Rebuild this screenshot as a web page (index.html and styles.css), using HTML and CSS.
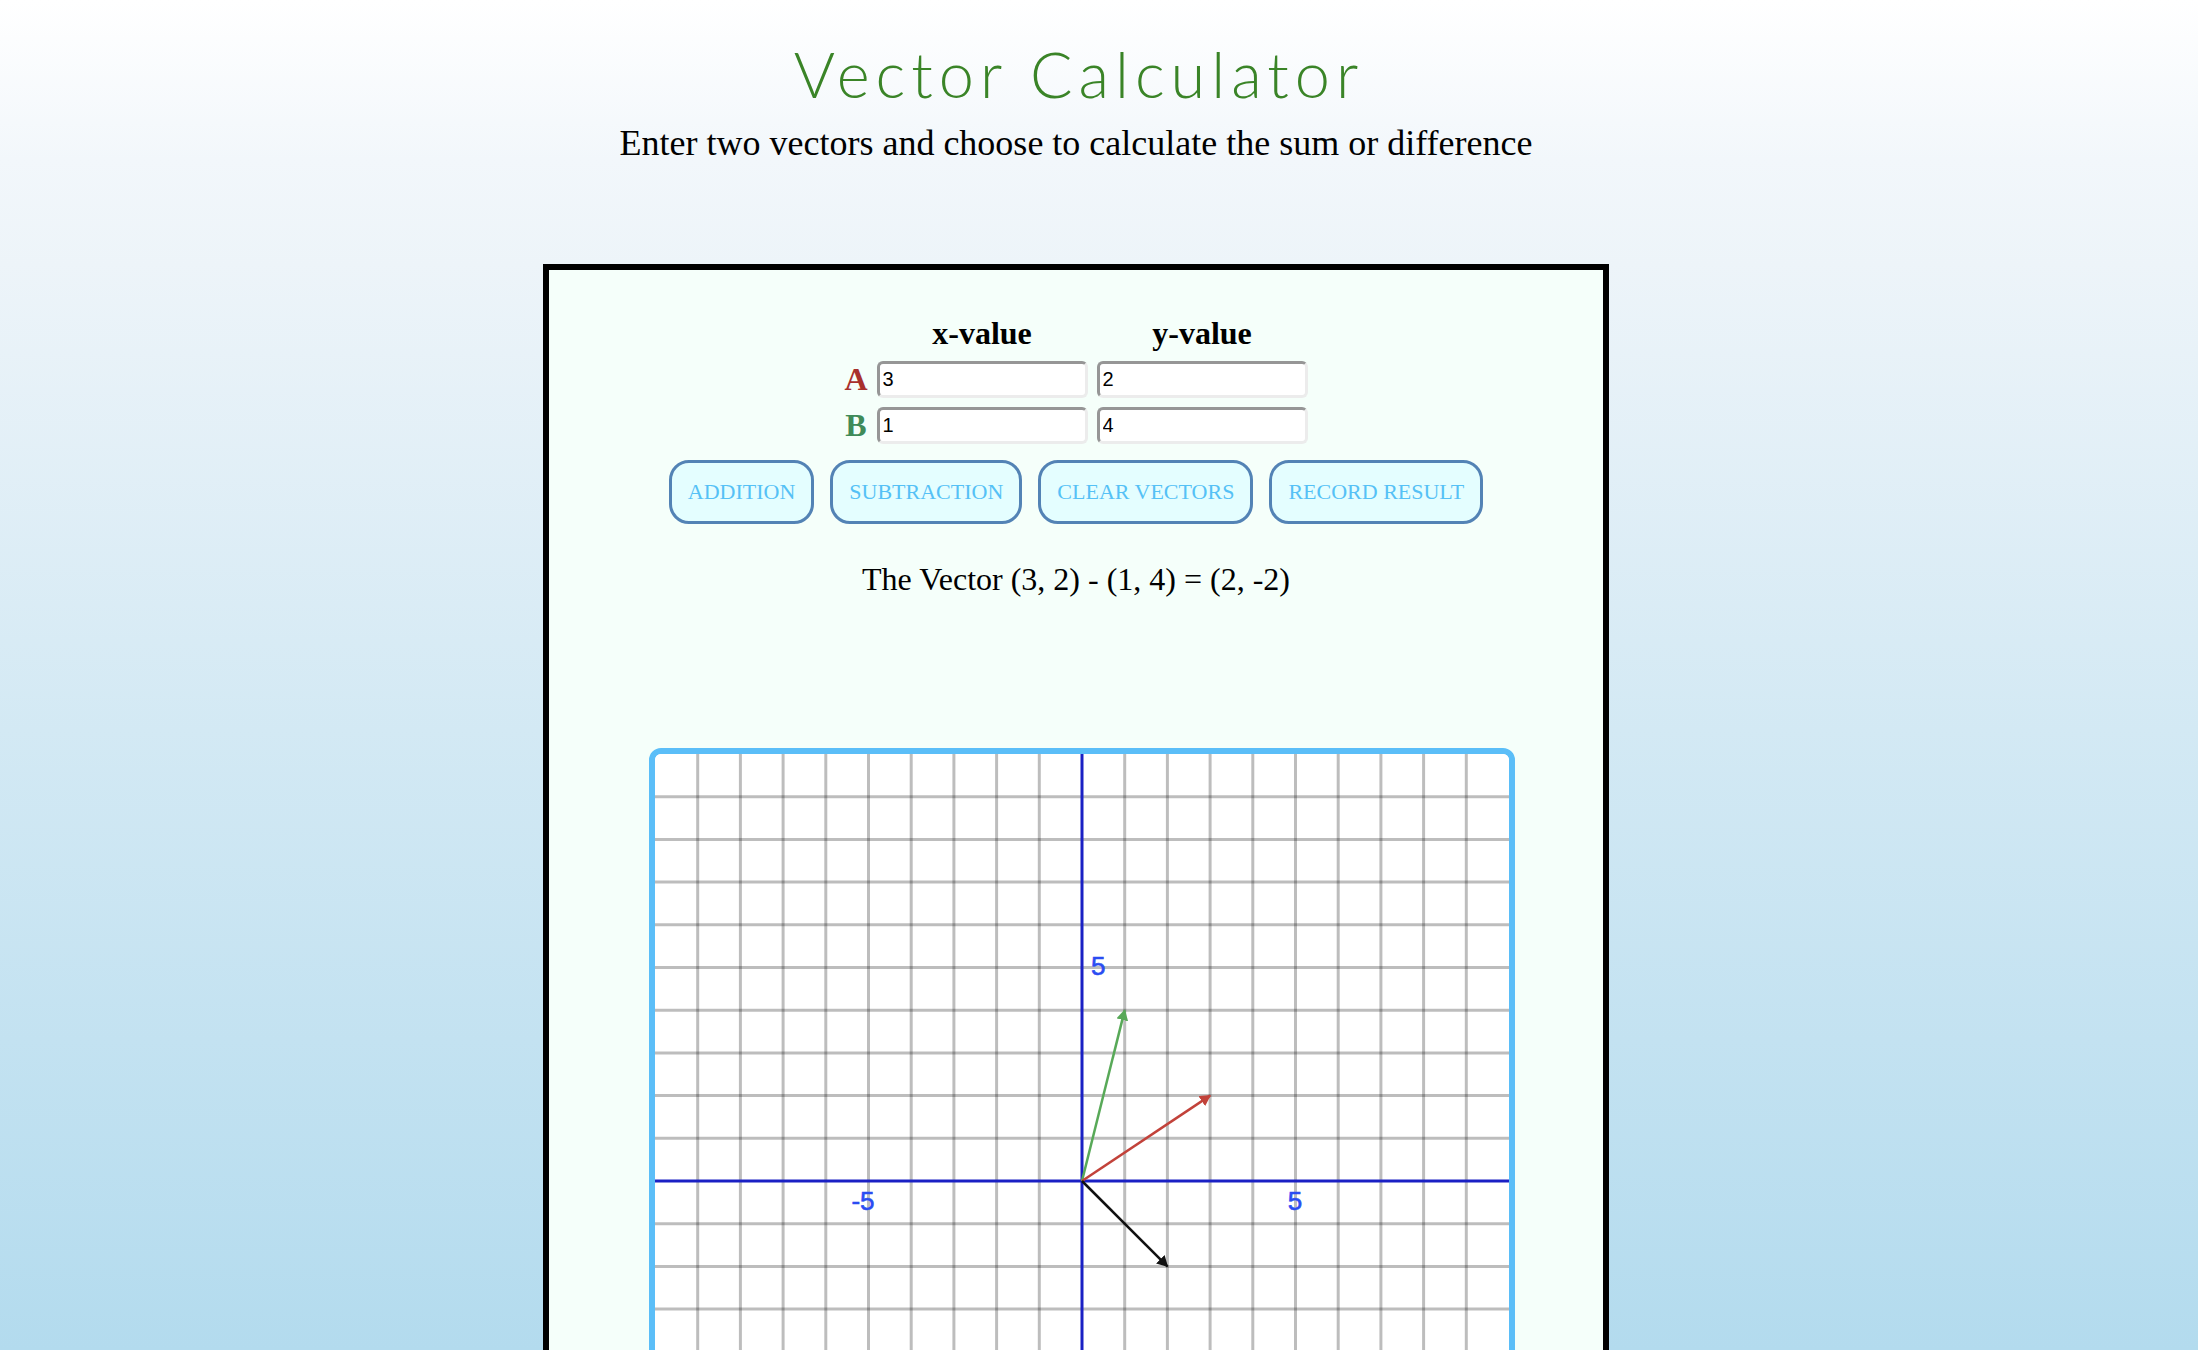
FILE: index.html
```html
<!DOCTYPE html>
<html lang="en">
<head>
<meta charset="utf-8">
<title>Vector Calculator</title>
<link rel="stylesheet" href="styles.css">
</head>
<body>
<header class="head">
  <h1 class="title">Vector Calculator</h1>
  <p class="subtitle">Enter two vectors and choose to calculate the sum or difference</p>
</header>
<main class="panel">
  <div class="form">
    <span class="corner"></span>
    <span class="colhead">x-value</span>
    <span class="colhead">y-value</span>
    <span class="rowlabel a">A</span>
    <input class="field" type="text" value="3">
    <input class="field" type="text" value="2">
    <span class="rowlabel b">B</span>
    <input class="field" type="text" value="1">
    <input class="field" type="text" value="4">
  </div>
  <div class="actions">
    <button class="btn">ADDITION</button>
    <button class="btn">SUBTRACTION</button>
    <button class="btn">CLEAR VECTORS</button>
    <button class="btn">RECORD RESULT</button>
  </div>
  <p class="result">The Vector (3, 2) - (1, 4) = (2, -2)</p>
  <div class="graph">
    <svg class="plane" width="854" height="854" viewBox="0 0 854 854">
      <defs>
        <marker id="hg" markerUnits="userSpaceOnUse" markerWidth="11" markerHeight="12" refX="10" refY="6" orient="auto"><path d="M0,0 L11,6 L0,12 Z" fill="#58a958"/></marker>
        <marker id="hr" markerUnits="userSpaceOnUse" markerWidth="11" markerHeight="12" refX="10" refY="6" orient="auto"><path d="M0,0 L11,6 L0,12 Z" fill="#c2423a"/></marker>
        <marker id="hk" markerUnits="userSpaceOnUse" markerWidth="11" markerHeight="12" refX="10" refY="6" orient="auto"><path d="M0,0 L11,6 L0,12 Z" fill="#111"/></marker>
      </defs>
      <rect x="0" y="0" width="854" height="854" fill="#ffffff"/>
      <path class="gridv" d="M42.7 0V854M85.4 0V854M128.1 0V854M170.8 0V854M213.5 0V854M256.2 0V854M298.9 0V854M341.6 0V854M384.3 0V854M469.7 0V854M512.4 0V854M555.1 0V854M597.8 0V854M640.5 0V854M683.2 0V854M725.9 0V854M768.6 0V854M811.3 0V854"/>
      <path class="gridh" d="M0 42.7H854M0 85.4H854M0 128.1H854M0 170.8H854M0 213.5H854M0 256.2H854M0 298.9H854M0 341.6H854M0 384.3H854M0 469.7H854M0 512.4H854M0 555.1H854M0 597.8H854M0 640.5H854M0 683.2H854M0 725.9H854M0 768.6H854M0 811.3H854"/>
      <path class="axis" d="M427 0V854M0 427H854"/>
      <text class="tick" x="436" y="221">5</text>
      <text class="tick mid" x="640" y="456">5</text>
      <text class="tick mid" x="208" y="456">-5</text>
      <line x1="427" y1="427" x2="469.7" y2="256.2" stroke="#58a958" stroke-width="2.5" marker-end="url(#hg)"/>
      <line x1="427" y1="427" x2="555.1" y2="341.6" stroke="#c2423a" stroke-width="2.5" marker-end="url(#hr)"/>
      <line x1="427" y1="427" x2="512.4" y2="512.4" stroke="#111" stroke-width="2.5" marker-end="url(#hk)"/>
    </svg>
  </div>
</main>
</body>
</html>
```

FILE: styles.css
```css
html {
  min-height: 100%;
  background: linear-gradient(to bottom, #ffffff 0px, #f2f7fb 160px, #edf4f9 264px, #d3e9f4 730px, #b3dbee 1350px) no-repeat;
  background-color: #b3dbee;
}

body {
  margin: 0;
  padding: 0 46px 0 0;
  font-family: "Liberation Serif", "Times New Roman", serif;
  color: #000;
}

.head {
  text-align: center;
}

.title {
  margin: 36px 0 0;
  padding-left: 6px;
  font-family: Lato, "Open Sans", sans-serif;
  font-weight: 300;
  font-size: 63px;
  line-height: 75px;
  letter-spacing: 6px;
  color: #3a8427;
}

.subtitle {
  margin: 12px 0 0;
  font-size: 36px;
  line-height: 40px;
}

.panel {
  box-sizing: border-box;
  width: 1066px;
  margin: 101px auto 0;
  padding: 45px 0 40px;
  border: 6px solid #000;
  background: #f5fffa;
}

.form {
  display: grid;
  grid-template-columns: 23px 211px 211px;
  grid-template-rows: 37px 37px 37px;
  column-gap: 9px;
  row-gap: 9px;
  justify-content: center;
}

.colhead {
  font-weight: bold;
  font-size: 32px;
  line-height: 37px;
  text-align: center;
}

.rowlabel {
  font-weight: bold;
  font-size: 32px;
  line-height: 37px;
  text-align: center;
}

.rowlabel.a { color: #a8302c; }
.rowlabel.b { color: #3f8b59; }

.field {
  box-sizing: border-box;
  width: 211px;
  height: 37px;
  margin: 0;
  padding: 0 3px;
  border: 3px solid;
  border-color: #969696 #ececec #ececec #969696;
  border-radius: 6px;
  background: #fff;
  font-family: "Liberation Sans", Arial, sans-serif;
  font-size: 20px;
  color: #000;
}

.actions {
  display: flex;
  justify-content: center;
  gap: 16px;
  margin-top: 16px;
}

.btn {
  box-sizing: border-box;
  height: 64px;
  margin: 0;
  padding: 0 16px;
  border: 3px solid #5383b5;
  border-radius: 20px;
  background: #e4feff;
  color: #55c1f6;
  font-family: "Liberation Serif", "Times New Roman", serif;
  font-size: 22px;
}

.result {
  margin: 37px 0 0;
  font-size: 32px;
  line-height: 36px;
  text-align: center;
}

.graph {
  box-sizing: border-box;
  width: 866px;
  height: 866px;
  margin: 151px 0 0 100px;
  border: 6px solid #5bbef8;
  border-radius: 12px;
  overflow: hidden;
  background: #fff;
}

.plane {
  display: block;
}

.gridv, .gridh {
  fill: none;
  stroke: rgba(0, 0, 0, 0.26);
  stroke-width: 3;
}

.axis {
  fill: none;
  stroke: #1a20c4;
  stroke-width: 3;
}

.tick {
  font-family: "Liberation Sans", Arial, sans-serif;
  font-size: 26px;
  fill: #2a4cf2;
  stroke: #2a4cf2;
  stroke-width: 0.6;
}

.tick.mid {
  text-anchor: middle;
}
```
